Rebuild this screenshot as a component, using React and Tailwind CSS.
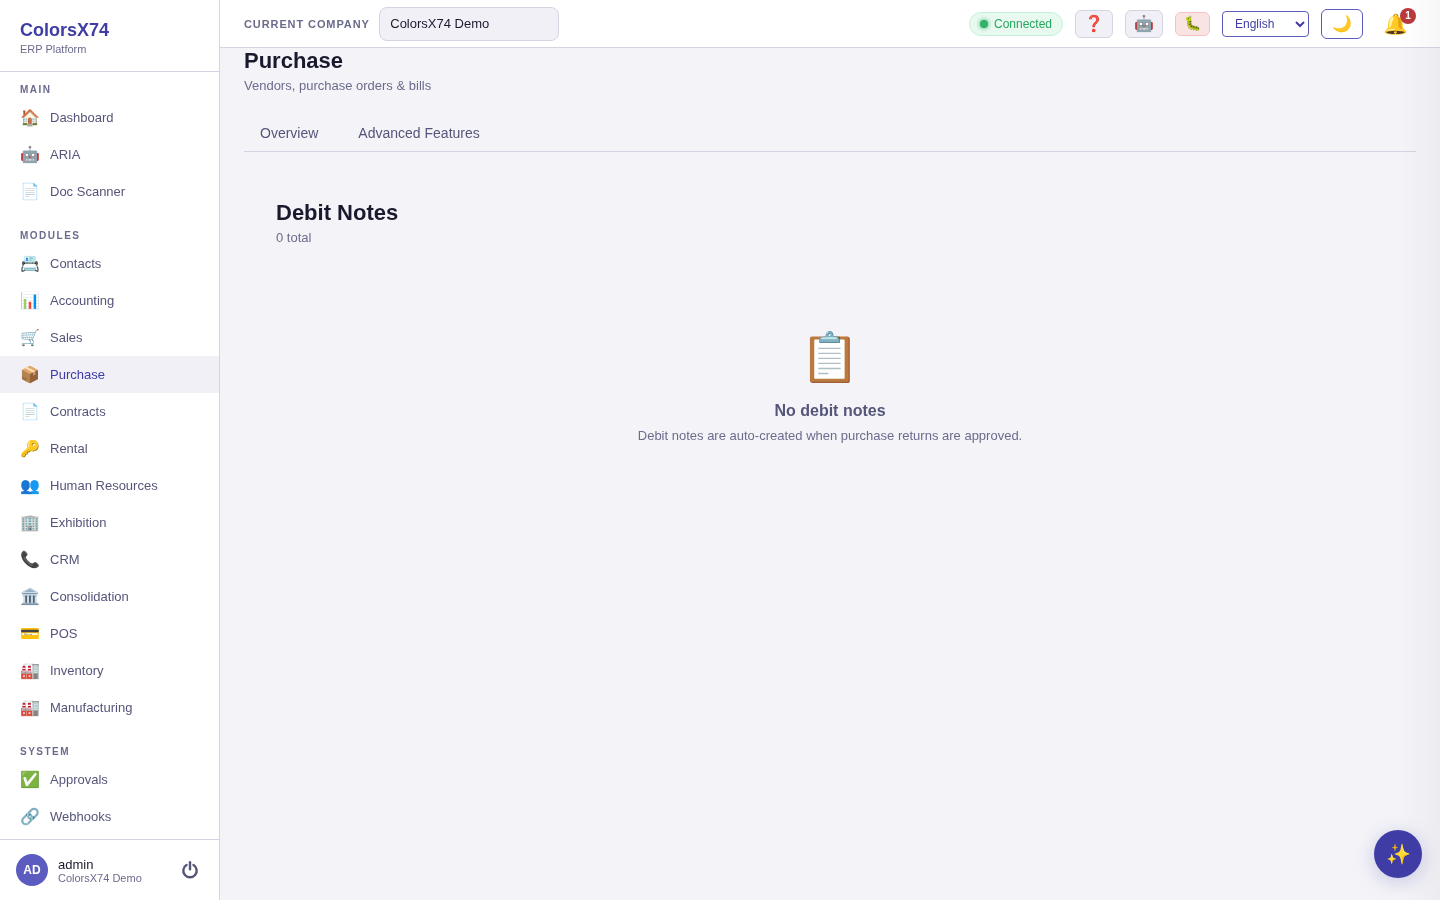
const groups = [
  { label: "MAIN", cls: "pt-3", items: [["🏠", "Dashboard"], ["🤖", "ARIA"], ["📄", "Doc Scanner"]] },
  { label: "MODULES", cls: "pt-5", items: [["📇", "Contacts"], ["📊", "Accounting"], ["🛒", "Sales"], ["📦", "Purchase"], ["📄", "Contracts"], ["🔑", "Rental"], ["👥", "Human Resources"], ["🏢", "Exhibition"], ["📞", "CRM"], ["🏛️", "Consolidation"], ["💳", "POS"], ["🏭", "Inventory"], ["🏭", "Manufacturing"]] },
  { label: "SYSTEM", cls: "pt-5", items: [["✅", "Approvals"], ["🔗", "Webhooks"]] },
];

function Sidebar() {
  return (
    <aside className="w-[220px] shrink-0 h-full bg-white border-r border-[#d4d4e3] flex flex-col">
      <div className="h-[72px] shrink-0 border-b border-[#d4d4e3] pl-5 pt-[19px]">
        <div className="text-[18px] leading-[22px] font-bold text-[#3f3da5]">ColorsX74</div>
        <div className="text-[11px] leading-[13px] mt-[2px] text-[#6b6b8d]">ERP Platform</div>
      </div>
      <nav className="flex-1 overflow-hidden">
        {groups.map((g) => (
          <div key={g.label} className={g.cls}>
            <div className="px-5 text-[10px] leading-[12px] mb-[3px] font-bold tracking-[1.5px] text-[#6b6b8d]">{g.label}</div>
            {g.items.map(([icon, name]) => {
              const active = name === "Purchase";
              return (
                <div key={name} className={`h-[37px] flex items-center pl-5 gap-[10px] text-[13px] ${active ? "bg-[#f0f0f6] text-[#3f3da5]" : "text-[#55557a]"}`}>
                  <span className="w-5 text-center text-[16px] leading-5 flex justify-center">{icon}</span>
                  <span>{name}</span>
                </div>
              );
            })}
          </div>
        ))}
      </nav>
      <div className="h-[61px] shrink-0 border-t border-[#d4d4e3] flex items-center pl-4 pr-[19px]">
        <div className="w-8 h-8 rounded-full bg-[#5c5bc0] text-white text-[12px] font-bold flex items-center justify-center">AD</div>
        <div className="ml-[10px] flex-1 pt-[2px]">
          <div className="text-[13px] leading-[15px] text-[#1a1a2e]">admin</div>
          <div className="text-[11px] leading-[13px] text-[#6b6b8d]">ColorsX74 Demo</div>
        </div>
        <svg width="20" height="20" viewBox="0 0 20 20" fill="none" stroke="#55557a" strokeWidth="2.4" strokeLinecap="round"><path d="M10 2.2v7" /><path d="M6.5 4.9a6.7 6.7 0 1 0 7 0" /></svg>
      </div>
    </aside>
  );
}

function Header() {
  return (
    <header className="h-12 shrink-0 bg-white border-b border-[#d4d4e3] flex items-center pl-6 pr-6">
      <span className="pt-[2px] text-[11px] font-bold tracking-[0.9px] text-[#6b6b8d]">CURRENT COMPANY</span>
      <div className="ml-[9px] w-[180px] h-[34px] rounded-lg bg-[#f0f0f6] border border-[#d4d4e3] pl-[10.5px] flex items-center text-[13px] text-[#1a1a2e]">ColorsX74 Demo</div>
      <div className="flex-1" />
      <div className="h-6 w-[94px] rounded-full bg-[#e8f9ef] border border-[#c3f0d5] flex items-center pl-[10px] text-[12px] text-[#27a560]">
        <span className="w-2 h-2 rounded-full bg-[#33b068] mr-[6px] shadow-[0_0_4px_#33b068]" />Connected
      </div>
      <div className="ml-3 w-[38px] h-7 rounded-md bg-[#f0f0f6] border border-[#d4d4e3] flex items-center justify-center text-[16px]">❓</div>
      <div className="ml-3 w-[38px] h-7 rounded-md bg-[#f0f0f6] border border-[#d4d4e3] flex items-center justify-center text-[16px]">🤖</div>
      <div className="ml-3 w-[35px] h-6 rounded-md bg-[#fae3e3] border border-[#f5c2c2] flex items-center justify-center text-[14px]">🐛</div>
      <select defaultValue="English" className="ml-3 w-[87px] h-[26px] rounded bg-white border border-[#5c5bc0] pl-2 text-[12px] text-[#3f3da5]">
        <option>English</option>
      </select>
      <div className="ml-3 w-[42px] h-[30px] rounded-md bg-white border border-[#5c5bc0] flex items-center justify-center text-[16px]">🌙</div>
      <div className="relative ml-3 w-[41px] h-8 flex items-center justify-center text-[20px]">
        🔔
        <span className="absolute top-0 right-0 w-4 h-4 rounded-full bg-[#b83a3f] text-white text-[10px] font-bold flex items-center justify-center">1</span>
      </div>
    </header>
  );
}

export default function App() {
  return (
    <div className="relative w-full h-screen overflow-hidden flex bg-[#f4f4f8] font-['Liberation_Sans',sans-serif] [will-change:transform]">
      <Sidebar />
      <div className="flex-1 min-w-0 flex flex-col">
        <Header />
        <main className="flex-1 px-6 overflow-hidden">
          <h1 className="text-[22px] leading-[26px] font-bold text-[#1a1a2e]">Purchase</h1>
          <p className="mt-[4px] text-[13px] leading-[15px] text-[#6b6b8d]">Vendors, purchase orders &amp; bills</p>
          <div className="mt-[20px] h-[39px] border-b border-[#d4d4e3] flex text-[14px] text-[#55557a]">
            <div className="px-4 pt-[2px] flex items-center">Overview</div>
            <div className="ml-2 px-4 pt-[2px] flex items-center">Advanced Features</div>
          </div>
          <section className="px-8 pt-[48px]">
            <h2 className="text-[22px] leading-[26px] font-bold text-[#1a1a2e]">Debit Notes</h2>
            <p className="mt-[4px] text-[13px] leading-[15px] text-[#6b6b8d]">0 total</p>
            <div className="mt-[77px] flex flex-col items-center">
              <div className="text-[48px] leading-[72px]">📋</div>
              <div className="mt-[8px] text-[16px] leading-[18px] font-bold text-[#55557a]">No debit notes</div>
              <div className="mt-[8px] text-[13px] leading-[15px] text-[#6b6b8d]">Debit notes are auto-created when purchase returns are approved.</div>
            </div>
          </section>
        </main>
      </div>
      <div className="absolute top-0 right-0 w-10 h-full bg-gradient-to-r from-transparent to-[#00000008] pointer-events-none" />
      <div className="absolute right-[18px] bottom-[22px] w-12 h-12 rounded-full bg-[#3f3da5] shadow-[0_4px_20px_rgba(63,61,165,0.25)] flex items-center justify-center text-[20px]">✨</div>
    </div>
  );
}
